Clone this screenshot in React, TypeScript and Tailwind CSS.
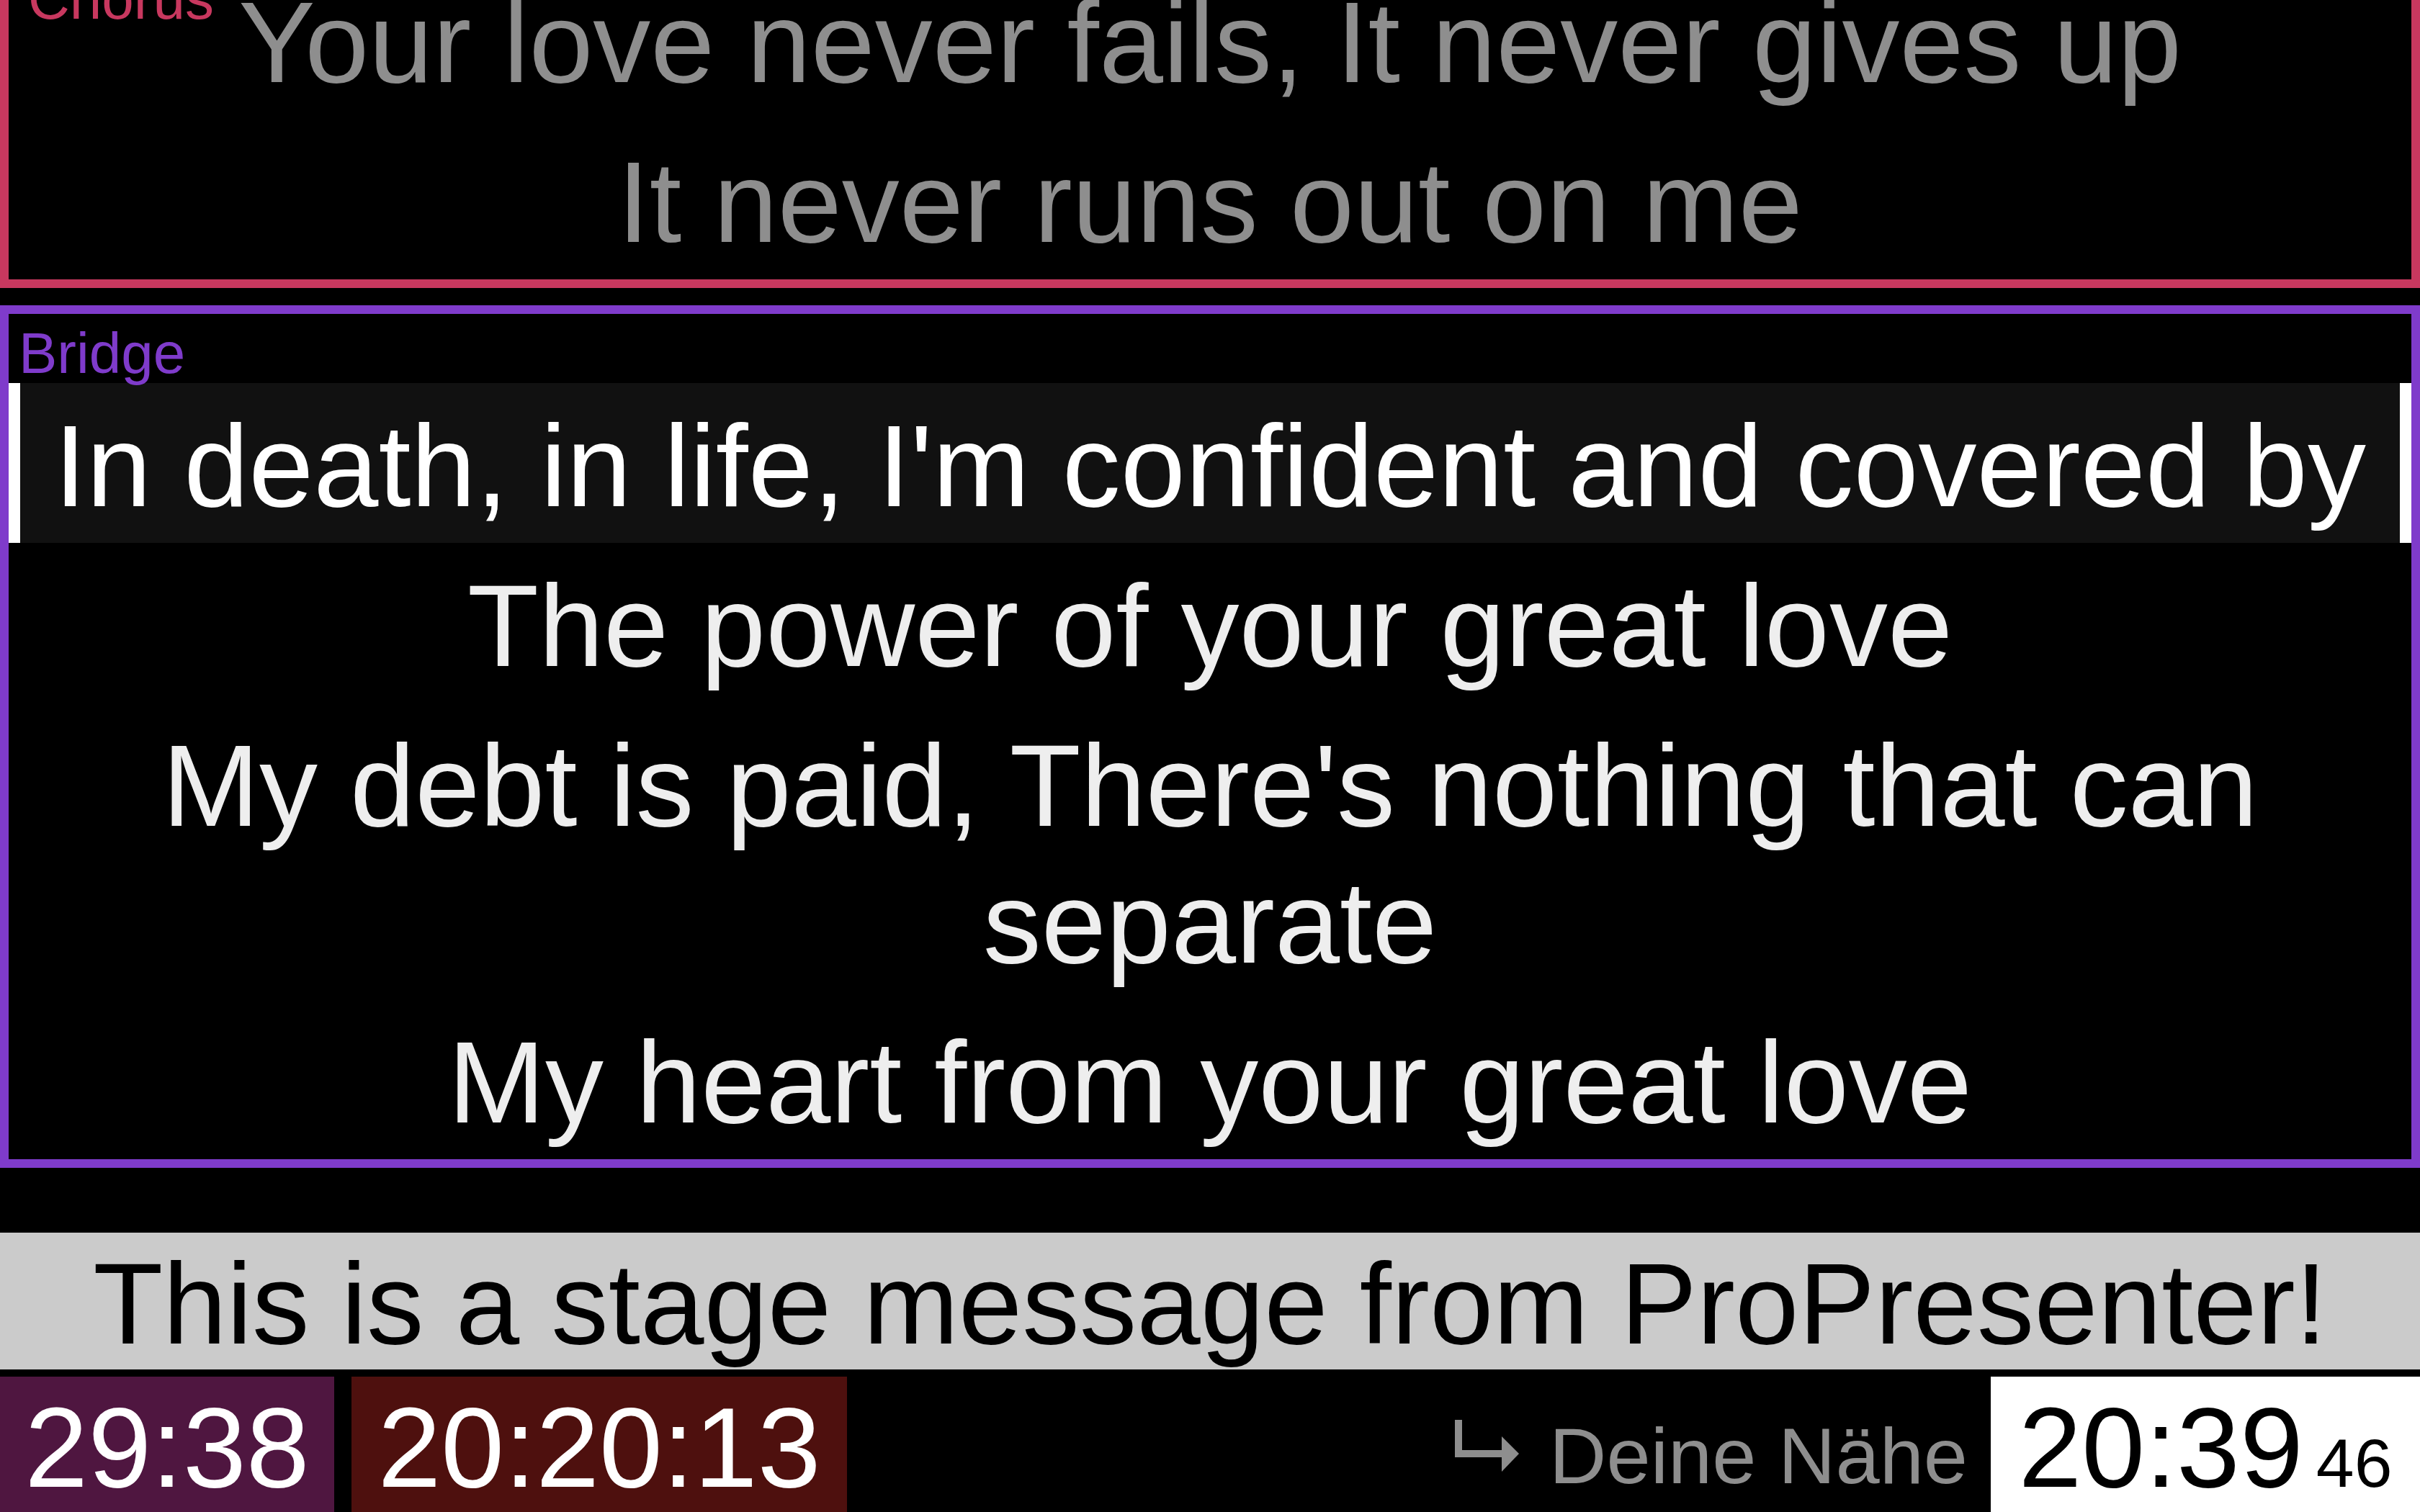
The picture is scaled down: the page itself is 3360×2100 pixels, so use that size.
import React from "react";

function LyricRow({ text, color, current, size }: { text: string; color: string; current?: boolean; size?: string }) {
  if (current) {
    return (
      <div className="bg-[#111111] border-x-[16px] border-white pt-[20px] pb-[12px] px-[4px] text-center text-white text-[162px] leading-[190px]">
        {text}
      </div>
    );
  }
  return (
    <div className={`pt-[20px] pb-[12px] px-[20px] text-center leading-[190px] ${size ?? "text-[162px]"} ${color}`}>{text}</div>
  );
}

function ReturnArrow() {
  return (
    <svg width="90" height="72" viewBox="0 0 90 72" className="mt-[60px] shrink-0">
      <rect x="0" y="0" width="10" height="52" fill="#8e8e8e" />
      <rect x="0" y="42" width="68" height="10" fill="#8e8e8e" />
      <polygon points="65,23 89,47 65,72" fill="#8e8e8e" />
    </svg>
  );
}

export default function App() {
  return (
    <div className="h-screen w-full overflow-hidden bg-black flex flex-col font-['Liberation_Sans',Arial,Helvetica,sans-serif]">
      {/* Chorus (scrolled partly out of view) */}
      <div className="relative mt-[-68px] border-[12px] border-[#c8385f] shrink-0">
        <div className="absolute left-[27px] top-[15px] text-[80px] leading-[80px] text-[#c8385f]">Chorus</div>
        <LyricRow text="Your love never fails, It never gives up" color="text-[#8e8e8e]" size="text-[160px]" />
        <LyricRow text="It never runs out on me" color="text-[#8e8e8e]" size="text-[160px]" />
      </div>

      {/* Bridge */}
      <div className="mt-[24px] border-[12px] border-[#7f3bcb] shrink-0">
        <div className="h-[96px] pt-[15px] pl-[14px] text-[80px] leading-[80px] text-[#7f3bcb]">Bridge</div>
        <LyricRow text="In death, in life, I'm confident and covered by" color="text-white" current />
        <LyricRow text="The power of your great love" color="text-[#eeeeee]" />
        <LyricRow text="My debt is paid, There's nothing that can separate" color="text-[#eeeeee]" />
        <LyricRow text="My heart from your great love" color="text-[#eeeeee]" />
      </div>

      {/* Stage message */}
      <div className="mt-[90px] h-[190px] shrink-0 overflow-hidden bg-[#cbcbcb] text-center text-black text-[159px] leading-[199px] whitespace-nowrap">
        This is a stage message from ProPresenter!
      </div>

      {/* Bottom bar */}
      <div className="mt-[10px] h-[190px] shrink-0 flex items-stretch">
        <div className="h-[190px] w-[464px] overflow-hidden bg-[#4f1640] text-white text-[158px] leading-[196px] text-center">29:38</div>
        <div className="ml-[24px] h-[190px] w-[688px] overflow-hidden bg-[#4e100e] text-white text-[158px] leading-[196px] text-center">20:20:13</div>
        <div className="flex-1" />
        <div className="h-[190px] flex items-start">
          <ReturnArrow />
          <div className="ml-[41px] mr-[32px] pt-[55px] text-[110px] leading-[110px] text-[#8e8e8e] whitespace-nowrap">Deine Nähe</div>
        </div>
        <div className="h-[190px] w-[596px] overflow-hidden bg-white text-black flex items-baseline justify-center gap-[18px]">
          <span className="text-[158px] leading-[196px]">20:39</span>
          <span className="text-[95px] leading-[196px]">46</span>
        </div>
      </div>
    </div>
  );
}
